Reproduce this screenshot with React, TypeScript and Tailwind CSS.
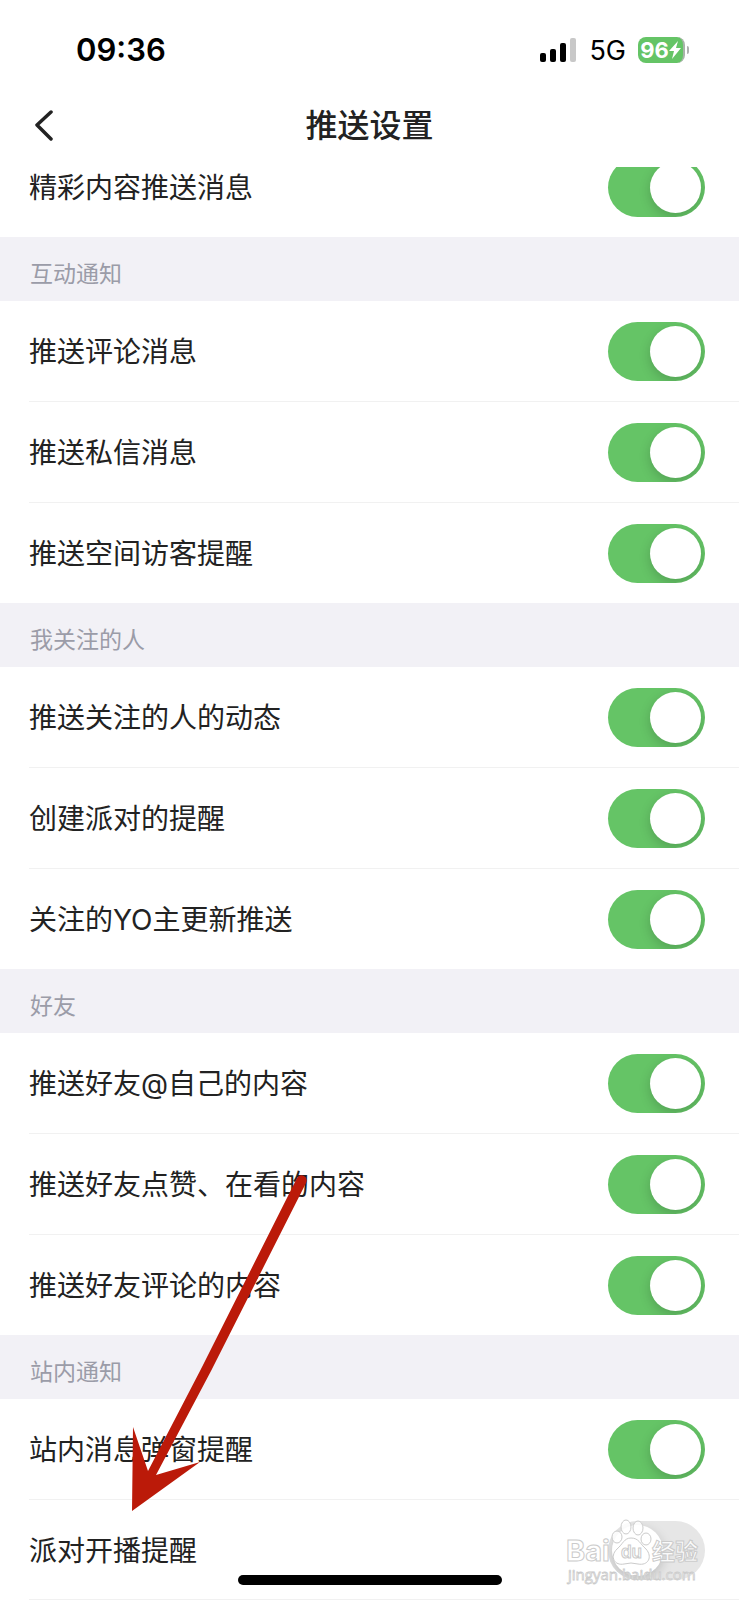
import { useId, useState } from "react";

interface SettingItem {
  label: string;
  on: boolean;
}

interface SettingSection {
  title: string;
  items: SettingItem[];
}

const FONT = "font-['Inter','Noto_Sans_CJK_SC',sans-serif]";

const SECTIONS: SettingSection[] = [
  {
    title: "互动通知",
    items: [
      { label: "推送评论消息", on: true },
      { label: "推送私信消息", on: true },
      { label: "推送空间访客提醒", on: true },
    ],
  },
  {
    title: "我关注的人",
    items: [
      { label: "推送关注的人的动态", on: true },
      { label: "创建派对的提醒", on: true },
      { label: "关注的YO主更新推送", on: true },
    ],
  },
  {
    title: "好友",
    items: [
      { label: "推送好友@自己的内容", on: true },
      { label: "推送好友点赞、在看的内容", on: true },
      { label: "推送好友评论的内容", on: true },
    ],
  },
  {
    title: "站内通知",
    items: [
      { label: "站内消息弹窗提醒", on: true },
      { label: "派对开播提醒", on: false },
    ],
  },
];

function StatusBar() {
  return (
    <div className="flex h-[100px] items-center justify-between pr-[50px] pl-[76px] text-black">
      <span className="text-[31px] leading-10 font-semibold">09:36</span>
      <div className="flex items-center">
        <svg className="h-6 w-[37px]" viewBox="0 0 37 24" aria-hidden="true">
          <rect x="0" y="15" width="6" height="9" rx="2" />
          <rect x="10" y="11" width="6" height="13" rx="2" />
          <rect x="20" y="5" width="6" height="19" rx="2" />
          <rect x="30" y="0" width="6" height="24" rx="2" fill="#c8c8c8" />
        </svg>
        <span className="ml-3 pt-0.5 text-[27px] leading-8">5G</span>
        <div className="ml-3 flex h-[26px] w-[47px] items-center justify-center rounded-lg border-r-2 border-[#a9b3a9] bg-[#65c466] text-white">
          <span className="text-[22px] leading-6 font-bold">96</span>
          <svg className="h-[18px] w-3" viewBox="0 0 12 18" fill="currentColor" aria-hidden="true">
            <path d="M9 0 0 10h5L3 18l9-11H7z" />
          </svg>
        </div>
        <span className="ml-0.5 h-2 w-0.5 rounded-r-full bg-[#b0b0b0]" />
      </div>
    </div>
  );
}

function NavBar() {
  return (
    <header className="grid h-[67px] grid-cols-[1fr_auto_1fr] items-start px-8">
      <button type="button" aria-label="返回" className="flex h-[50px] w-8 items-center">
        <svg className="h-8 w-6" viewBox="0 0 24 32" fill="none" stroke="#222" strokeWidth="3.5" strokeLinecap="round" strokeLinejoin="round">
          <path d="M19 3 5 16l14 14" />
        </svg>
      </button>
      <h1 className="text-[32px] leading-[52px] font-medium text-[#222]">推送设置</h1>
    </header>
  );
}

function SettingRow({ label, on }: SettingItem) {
  const id = useId();
  const [checked, setChecked] = useState(on);

  return (
    <div className="flex h-[100px] shrink-0 items-center justify-between pr-[34px] pl-[29px]">
      <label htmlFor={id} className="pt-0.5 text-[28px] leading-10 text-[#222]">{label}</label>
      <input
        id={id}
        type="checkbox"
        role="switch"
        checked={checked}
        onChange={(e) => setChecked(e.target.checked)}
        className="h-[59px] w-[97px] shrink-0 appearance-none overflow-hidden rounded-full bg-[#e6e6e6] p-1 before:block before:size-[51px] before:rounded-full before:bg-white before:shadow-[0_4px_12px_rgba(0,0,0,0.18)] before:content-[''] checked:bg-[#65c466] checked:before:ml-auto"
      />
    </div>
  );
}

function Section({ title, items }: SettingSection) {
  return (
    <section>
      <h2 className="flex h-16 items-center bg-[#f2f1f6] pt-2.5 pl-[30px] text-[23px] leading-8 text-[#9b9ca8]">{title}</h2>
      <div>
        {items.map((item, i) => (
          <div key={item.label}>
            {i > 0 && <div className="ml-[29px] h-px bg-[#f1f1f1]" />}
            <SettingRow {...item} />
          </div>
        ))}
      </div>
    </section>
  );
}

function Arrow() {
  return (
    <svg className="pointer-events-none absolute top-[1170px] left-[120px] h-[350px] w-[200px]" viewBox="120 1170 200 350" fill="#bb1a09" aria-hidden="true">
      <path d="M297 1178A5 5 0 0 1 306 1183L211 1371L156 1475L200 1462L132 1511L133 1427L148 1471L201 1369Z" />
    </svg>
  );
}

function Watermark() {
  return (
    <svg className="pointer-events-none absolute right-[34px] bottom-3 h-[72px] w-[140px]" viewBox="565 1516 140 72" aria-hidden="true">
      <g fill="#fff" fillOpacity="0.85" stroke="#cbcbcb" strokeWidth="1">
        <text x="566" y="1561" fontSize="29" fontWeight="700" fontFamily="Inter, sans-serif">Bai</text>
        <text x="652" y="1560" fontSize="23" fontWeight="700" fontFamily="Noto Sans CJK SC, sans-serif">经验</text>
        <ellipse cx="617" cy="1537" rx="5" ry="6" />
        <ellipse cx="626" cy="1527" rx="5" ry="7" />
        <ellipse cx="638" cy="1528" rx="5" ry="7" />
        <ellipse cx="646" cy="1539" rx="5" ry="6" />
        <path d="M631 1538C624 1538 623 1544 617 1549C609 1557 615 1566 624 1564Q631 1562 638 1564C648 1566 653 1557 646 1549C640 1544 639 1538 631 1538Z" />
        <text x="621" y="1558" fontSize="17" fontWeight="600" fontFamily="Inter, sans-serif">du</text>
        <text x="568" y="1580" fontSize="15" strokeWidth="0.8" fontFamily="Open Sans, sans-serif">jingyan.baidu.com</text>
      </g>
    </svg>
  );
}

export default function App() {
  return (
    <main className={`relative w-full overflow-hidden bg-white ${FONT}`}>
      <StatusBar />
      <NavBar />
      {/* first row is partly scrolled under the nav bar */}
      <div className="flex h-[70px] flex-col justify-end overflow-hidden">
        <SettingRow label="精彩内容推送消息" on />
      </div>
      {SECTIONS.map((section) => (
        <Section key={section.title} {...section} />
      ))}
      <div className="-mt-px ml-[29px] h-px bg-[#f1f1f1]" />
      <Arrow />
      <Watermark />
      <div className="absolute bottom-[15px] left-1/2 h-[10px] w-[264px] -translate-x-1/2 rounded-full bg-black" />
    </main>
  );
}
